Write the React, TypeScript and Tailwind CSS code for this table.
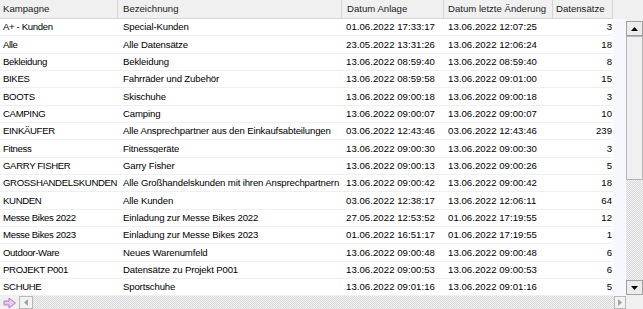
import React from "react";

const rows: [string, string, string, string, string][] = [
  ["A+ - Kunden", "Special-Kunden", "01.06.2022 17:33:17", "13.06.2022 12:07:25", "3"],
  ["Alle", "Alle Datensätze", "23.05.2022 13:31:26", "13.06.2022 12:06:24", "18"],
  ["Bekleidung", "Bekleidung", "13.06.2022 08:59:40", "13.06.2022 08:59:40", "8"],
  ["BIKES", "Fahrräder und Zubehör", "13.06.2022 08:59:58", "13.06.2022 09:01:00", "15"],
  ["BOOTS", "Skischuhe", "13.06.2022 09:00:18", "13.06.2022 09:00:18", "3"],
  ["CAMPING", "Camping", "13.06.2022 09:00:07", "13.06.2022 09:00:07", "10"],
  ["EINKÄUFER", "Alle Ansprechpartner aus den Einkaufsabteilungen", "03.06.2022 12:43:46", "03.06.2022 12:43:46", "239"],
  ["Fitness", "Fitnessgeräte", "13.06.2022 09:00:30", "13.06.2022 09:00:30", "3"],
  ["GARRY FISHER", "Garry Fisher", "13.06.2022 09:00:13", "13.06.2022 09:00:26", "5"],
  ["GROSSHANDELSKUNDEN", "Alle Großhandelskunden mit ihren Ansprechpartnern", "13.06.2022 09:00:42", "13.06.2022 09:00:42", "18"],
  ["KUNDEN", "Alle Kunden", "03.06.2022 12:38:17", "13.06.2022 12:06:11", "64"],
  ["Messe Bikes 2022", "Einladung zur Messe Bikes 2022", "27.05.2022 12:53:52", "01.06.2022 17:19:55", "12"],
  ["Messe Bikes 2023", "Einladung zur Messe Bikes 2023", "01.06.2022 16:51:17", "01.06.2022 17:19:55", "1"],
  ["Outdoor-Ware", "Neues Warenumfeld", "13.06.2022 09:00:48", "13.06.2022 09:00:48", "6"],
  ["PROJEKT P001", "Datensätze zu Projekt P001", "13.06.2022 09:00:53", "13.06.2022 09:00:53", "6"],
  ["SCHUHE", "Sportschuhe", "13.06.2022 09:01:16", "13.06.2022 09:01:16", "5"],
];

const hatch =
  "bg-[image:repeating-conic-gradient(#d9d9d9_0%_25%,#f2f2f2_0%_50%)] bg-[length:2px_2px]";

function Tri({ dir, color = "#000" }: { dir: "up" | "down" | "left" | "right"; color?: string }) {
  const pts =
    dir === "up"
      ? "0,4 7,4 3.5,0"
      : dir === "down"
      ? "0,0 7,0 3.5,4"
      : dir === "left"
      ? "4,0 4,7 0,3.5"
      : "0,0 0,7 4,3.5";
  const w = dir === "up" || dir === "down" ? 7 : 4;
  const h = dir === "up" || dir === "down" ? 4 : 7;
  return (
    <svg width={w} height={h} viewBox={`0 0 ${w} ${h}`}>
      <polygon points={pts} fill={color} />
    </svg>
  );
}

export default function App() {
  const font = { fontFamily: '"Liberation Sans", Arial, sans-serif' };
  return (
    <div
      className="w-[643px] h-[309px] overflow-hidden bg-[#f0f0f0] flex flex-col text-[9.6px] text-[#1b1b1b] leading-none"
      style={font}
    >
      <div className="flex h-[296px]">
        {/* table */}
        <div className="w-[626px] flex flex-col">
          <div className="flex h-[19px] shrink-0 whitespace-nowrap">
            <div className="flex w-[613px] bg-[#f0f0f0] border-b border-[#d5d5d5]">
              <div className="w-[118px] pl-[3px] flex items-center border-r border-[#d5d5d5]">Kampagne</div>
              <div className="w-[224px] pl-[5px] flex items-center border-r border-[#d5d5d5]">Bezeichnung</div>
              <div className="w-[102px] pl-[5px] flex items-center border-r border-[#d5d5d5]">Datum Anlage</div>
              <div className="w-[109px] pl-[4px] flex items-center border-r border-[#d5d5d5]">Datum letzte Änderung</div>
              <div className="w-[60px] pl-[3px] flex items-center border-r border-[#d5d5d5]">Datensätze</div>
            </div>
            <div className="flex-1 bg-[#f0f0f0]" />
          </div>
          <div className="flex flex-1">
            <div className="w-[613px] bg-white flex flex-col">
              {rows.map((r, i) => (
                <div key={i} className="flex h-[17.33px] items-center border-b border-[#efefef] text-black whitespace-nowrap">
                  <div className="w-[118px] pl-[3px] overflow-hidden tracking-[-0.35px]">{r[0]}</div>
                  <div className="w-[224px] pl-[5px] overflow-hidden tracking-[-0.15px]">{r[1]}</div>
                  <div className="w-[102px] pl-[4px] overflow-hidden tracking-[0.05px]">{r[2]}</div>
                  <div className="w-[109px] pl-[4px] overflow-hidden tracking-[0.05px]">{r[3]}</div>
                  <div className="w-[60px] pr-[1px] text-right overflow-hidden">{r[4]}</div>
                </div>
              ))}
            </div>
            <div className="flex-1 bg-[#f6f8fd]" />
          </div>
        </div>
        {/* vertical scrollbar */}
        <div className="w-[17px] flex flex-col pt-[21px] pb-[1px]">
          <div className="h-[15px] shrink-0 border border-[#a0a0a0] bg-[#ececec] flex items-center justify-center">
            <Tri dir="up" />
          </div>
          <div className="h-[144px] shrink-0 border border-[#b4b4b4] bg-[#f0f0f0]" />
          <div className={`flex-1 ${hatch}`} />
          <div className="h-[15px] shrink-0 border border-[#a0a0a0] bg-[#ececec] flex items-center justify-center">
            <Tri dir="down" />
          </div>
        </div>
      </div>
      {/* horizontal scrollbar */}
      <div className="flex h-[13px]">
        <div className="w-[19px] flex items-center justify-center">
          <svg width="14" height="12" viewBox="0 0 14 12">
            <path
              d="M1 4 H6 V1 L12.5 6 L6 11 V8 H1 Z"
              fill="#e6c8f0"
              stroke="#b07ccc"
              strokeWidth="1"
              strokeLinejoin="round"
            />
          </svg>
        </div>
        <div className="w-[14px] border border-[#b8b8b8] bg-[#f2f2f2] flex items-center justify-center">
          <Tri dir="left" color="#a0a0a0" />
        </div>
        <div className={`w-[581px] ${hatch}`} />
        <div className="w-[12px] border border-[#b8b8b8] bg-[#f2f2f2] flex items-center justify-center">
          <Tri dir="right" color="#a0a0a0" />
        </div>
        <div className="flex-1 bg-[#f0f0f0]" />
      </div>
    </div>
  );
}
